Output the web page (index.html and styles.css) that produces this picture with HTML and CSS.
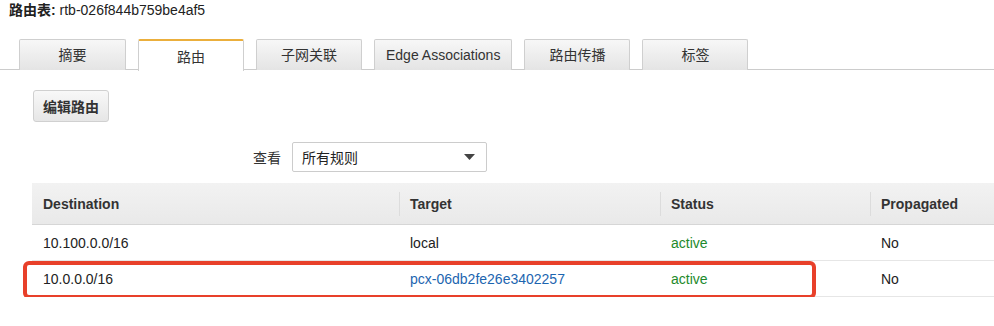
FILE: index.html
```html
<!DOCTYPE html>
<html lang="zh-CN">
<head>
    <meta charset="UTF-8">
    <title>路由表</title>
    <link rel="stylesheet" href="styles.css">
</head>
<body>
    <div class="title"><b>路由表:</b> rtb-026f844b759be4af5</div>

    <div class="tabs">
        <div class="tab">摘要</div>
        <div class="tab active">路由</div>
        <div class="tab">子网关联</div>
        <div class="tab">Edge Associations</div>
        <div class="tab">路由传播</div>
        <div class="tab">标签</div>
    </div>

    <div class="panel">
        <button class="btn">编辑路由</button>

        <div class="filter">
            <label for="view">查看</label>
            <div class="select" id="view">
                <span>所有规则</span>
                <svg width="11" height="6" viewBox="0 0 11 6"><path d="M0 0h11L5.5 6z" fill="#444"/></svg>
            </div>
        </div>

        <div class="table-wrap">
            <table class="routes">
                <thead>
                    <tr>
                        <th class="c-dest"><div>Destination</div></th>
                        <th class="c-target"><div class="sep">Target</div></th>
                        <th class="c-status"><div class="sep">Status</div></th>
                        <th class="c-prop"><div class="sep">Propagated</div></th>
                    </tr>
                </thead>
                <tbody>
                    <tr>
                        <td>10.100.0.0/16</td>
                        <td>local</td>
                        <td class="ok">active</td>
                        <td>No</td>
                    </tr>
                    <tr>
                        <td>10.0.0.0/16</td>
                        <td><a href="#">pcx-06db2fe26e3402257</a></td>
                        <td class="ok">active</td>
                        <td>No</td>
                    </tr>
                </tbody>
            </table>
            <!-- annotation box around the peering route -->
            <div class="highlight"></div>
        </div>
    </div>
</body>
</html>
```

FILE: styles.css
```css
body { margin: 0; font-family: "Liberation Sans", Arial, "Noto Sans CJK SC", sans-serif; font-size: 14px; color: #333; background: #fff; overflow: hidden; }
.title { padding: 2px 0 0 9px; line-height: 17px; color: #222; }
.title b { font-weight: bold; }

.tabs { display: flex; gap: 12px; margin-top: 20px; padding-left: 19px; border-bottom: 1px solid #ccc; height: 31px; box-sizing: border-box; }
.tab { min-width: 106px; padding: 0 11px; box-sizing: border-box; height: 31px; line-height: 31px; text-align: center; color: #333; background: linear-gradient(#f7f7f7, #e4e4e4); border: 1px solid #cfcfcf; border-bottom: none; border-radius: 2px 2px 0 0; }
.tab:first-child { min-width: 107px; }
.tab.active { background: #fff; border-top: 2px solid #ebaf3c; line-height: 33px; height: 32px; }

.panel { padding: 20px 0 0 32px; }
.btn { font: bold 14px "Liberation Sans", Arial, "Noto Sans CJK SC", sans-serif; color: #333; background: linear-gradient(#f8f8f8, #e6e6e6); border: 1px solid #d0d0d0; border-radius: 3px; height: 32px; padding: 0 9px; margin-left: 1px; }

.filter { display: flex; align-items: center; gap: 11px; margin-top: 20px; padding-left: 221px; }
.filter label { color: #333; }
.select { display: flex; align-items: center; justify-content: space-between; width: 195px; height: 30px; box-sizing: border-box; padding: 0 11px 0 9px; border: 1px solid #ccc; border-radius: 2px; background: #fff; color: #222; }

.table-wrap { position: relative; margin-top: 11px; }
.routes { border-collapse: collapse; width: 1000px; table-layout: fixed; }
.routes th { background: linear-gradient(#f2f2f2, #e9e9e9); height: 41px; padding: 0; text-align: left; font-weight: bold; color: #333; border-bottom: 1px solid #d6d6d6; }
.routes th div { padding-left: 11px; line-height: 24px; }
.routes th div.sep { border-left: 1px solid #dcdcdc; padding-left: 10px; }
.c-dest { width: 367px; }
.c-target { width: 261px; }
.c-status { width: 210px; }
.routes td { height: 35px; padding: 0 0 0 11px; border-bottom: 1px solid #e6e6e6; color: #222; }
.routes td.ok { color: #1d8a2c; }
.routes a { color: #1c65b0; text-decoration: none; }

.highlight { position: absolute; left: -9px; top: 78px; width: 793px; height: 38px; border: 4px solid #e8402a; border-radius: 6px; box-sizing: border-box; }
```
